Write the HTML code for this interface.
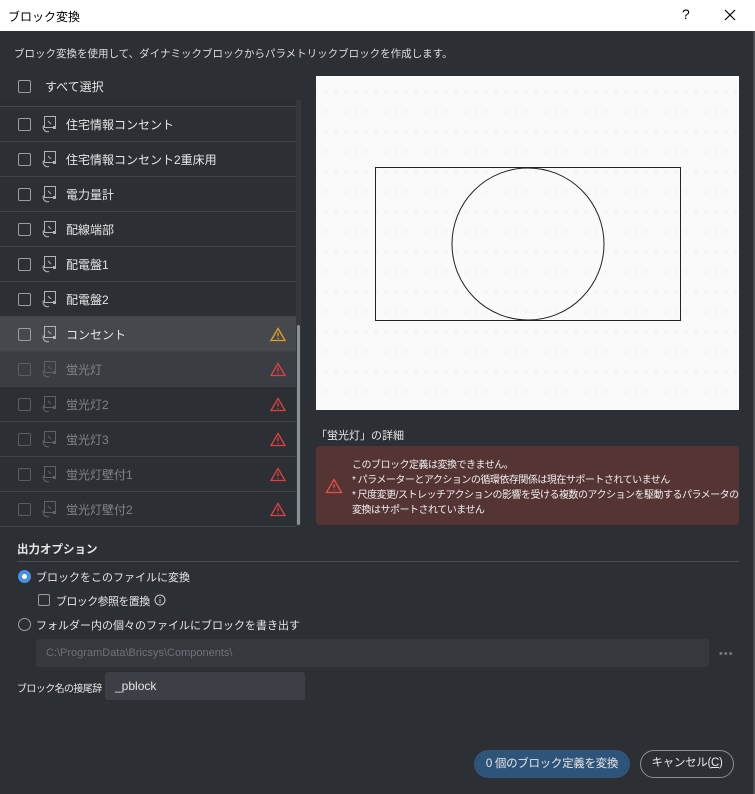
<!DOCTYPE html>
<html><head><meta charset="utf-8"><style>
*{box-sizing:border-box;margin:0;padding:0}
body{width:755px;height:794px;background:#2c2f34;font-family:"Liberation Sans","Noto Sans CJK JP",sans-serif;font-size:12px;color:#e6e6e6;position:relative;overflow:hidden}
.abs{position:absolute;white-space:nowrap}
.title{left:0;top:0;width:755px;height:31px;background:#fff;color:#000;font-size:12px}
.cb{position:absolute;width:13px;height:13px;border:1.5px solid #9a9ea4;border-radius:2px}
.row{position:absolute;left:0;width:296px;height:35px;border-bottom:1px solid #40434a}
.row .cb{left:18px;top:11px}
.row svg.ic{position:absolute;left:39px;top:8px}
.row .t{position:absolute;left:66px;top:9px;font-size:12px}
.row svg.w{position:absolute;left:270px;top:10px}
.dim{color:#80848a}
.dim .cb{border-color:#5a5e64}
</style></head><body>
<div class="abs title"><span class="abs" style="left:8px;top:8px">ブロック変換</span><span class="abs" style="left:682px;top:6px;font-size:14px">?</span>
<svg class="abs" style="left:724px;top:9px" width="12" height="12"><path d="M1 1L11 11M11 1L1 11" stroke="#000" stroke-width="1.2"/></svg></div>
<div class="abs" style="left:753px;top:31px;width:2px;height:763px;background:#4a4d52"></div>
<div class="abs" style="left:14px;top:46px;font-size:10.5px;color:#ddd">ブロック変換を使用して、ダイナミックブロックからパラメトリックブロックを作成します。</div>
<div class="cb" style="left:18px;top:80px"></div>
<div class="abs" style="left:45px;top:78px">すべて選択</div>
<div class="abs" style="left:0;top:100px;width:296px;height:7px;background:#2a2d31;border-bottom:1px solid #40434a"></div>
<div class="abs" style="left:296px;top:100px;width:5px;height:426px;background:#34373c"></div>
<div class="abs" style="left:297px;top:325px;width:3px;height:200px;background:#8c9097;border-radius:2px"></div>
<div id="list"></div>
<div class="abs" style="left:316px;top:76px;width:423px;height:334px;background:#fafafa;background-image:radial-gradient(#e4e4e4 0.5px,transparent 0.7px);background-size:10px 20px;background-position:5px 6px"></div>
<svg class="abs" style="left:316px;top:76px" width="423" height="334"><rect x="59.5" y="91.5" width="305" height="153" fill="none" stroke="#222" stroke-width="1"/><circle cx="212" cy="168" r="76" fill="none" stroke="#222" stroke-width="1"/></svg>
<div class="abs" style="left:316px;top:427px;font-size:11px">「蛍光灯」の詳細</div>
<div class="abs" style="left:316px;top:446px;width:423px;height:79px;background:#553533;border-radius:4px"></div>
<svg class="abs" style="left:325px;top:478px" width="18" height="16"><path d="M9 1.5L16.5 14.5H1.5Z" fill="none" stroke="#e84c4c" stroke-width="1.3"/><path d="M9 6V10M9 11.5V12.5" stroke="#e84c4c" stroke-width="1.3"/></svg>
<div class="abs" style="left:352px;top:458px;font-size:10px;line-height:15px;color:#eee;letter-spacing:-0.5px">このブロック定義は変換できません。<br>* パラメーターとアクションの循環依存関係は現在サポートされていません<br>* 尺度変更/ストレッチアクションの影響を受ける複数のアクションを駆動するパラメータの<br>変換はサポートされていません</div>
<div class="abs" style="left:17px;top:541px;font-weight:bold;font-size:11.5px">出力オプション</div>
<div class="abs" style="left:17px;top:561px;width:722px;height:1px;background:#4a4d52"></div>
<div class="abs" style="left:18px;top:570px;width:13px;height:13px;border-radius:50%;background:#4a90e2"><div class="abs" style="left:4px;top:4px;width:5px;height:5px;border-radius:50%;background:#fff"></div></div>
<div class="abs" style="left:36px;top:569px;font-size:11px">ブロックをこのファイルに変換</div>
<div class="cb" style="left:38px;top:594px;width:12px;height:12px"></div>
<div class="abs" style="left:56px;top:593px;font-size:11px;letter-spacing:-0.6px">ブロック参照を置換</div>
<svg class="abs" style="left:154px;top:594px" width="12" height="12"><circle cx="6" cy="6" r="5" fill="none" stroke="#ccc"/><path d="M6 5V9M6 3V4" stroke="#ccc"/></svg>
<div class="abs" style="left:18px;top:618px;width:13px;height:13px;border-radius:50%;border:1.5px solid #9a9ea4"></div>
<div class="abs" style="left:36px;top:617px;font-size:11px">フォルダー内の個々のファイルにブロックを書き出す</div>
<div class="abs" style="left:36px;top:639px;width:673px;height:28px;background:#35383d;border-radius:3px;color:#6e7278;font-size:11px;padding:8px 10px">C:\ProgramData\Bricsys\Components\</div>
<div class="abs" style="left:719px;top:648px;color:#777;font-size:11px;letter-spacing:1px">•••</div>
<div class="abs" style="left:17px;top:680px;font-size:10px;letter-spacing:-0.6px">ブロック名の接尾辞</div>
<div class="abs" style="left:105px;top:672px;width:200px;height:28px;background:#3c3f45;border-radius:3px;padding:7px 10px;font-size:12px">_pblock</div>
<div class="abs" style="left:474px;top:750px;width:156px;height:28px;background:#2f5479;border-radius:14px;text-align:center;line-height:28px;font-size:11.5px;letter-spacing:-0.3px">0 個のブロック定義を変換</div>
<div class="abs" style="left:640px;top:750px;width:94px;height:28px;border:1.5px solid #8a8e94;border-radius:14px;text-align:center;line-height:25px;font-size:11.5px;letter-spacing:-0.3px">キャンセル(<u>C</u>)</div>
<script>
var items=[["住宅情報コンセント",0,""],["住宅情報コンセント2重床用",0,""],["電力量計",0,""],["配線端部",0,""],["配電盤1",0,""],["配電盤2",0,""],["コンセント",0,"y"],["蛍光灯",1,"r"],["蛍光灯2",1,"r"],["蛍光灯3",1,"r"],["蛍光灯壁付1",1,"r"],["蛍光灯壁付2",1,"r"]];
var h="";
items.forEach(function(it,i){var top=107+i*35;var bg=i==6?"#45484d":(i==7?"#3a3d42":"#2c2f34");
var c=it[1]?"#5e6268":"#b0b4b8";
var w="";if(it[2]){var col=it[2]=="y"?"#e8a020":"#e04040";w='<svg class="w" width="16" height="15"><path d="M8 1.5L15 13.5H1Z" fill="none" stroke="'+col+'" stroke-width="1.3"/><path d="M8 5.5V9.5M8 11V12" stroke="'+col+'" stroke-width="1.3"/></svg>';}
h+='<div class="row'+(it[1]?' dim':'')+'" style="top:'+top+'px;background:'+bg+'"><div class="cb"></div><svg class="ic" width="20" height="20"><rect x="5.5" y="1.5" width="11" height="11" fill="none" stroke="'+c+'" stroke-width="1"/><path d="M9 6L12 9" stroke="'+c+'"/><rect x="14" y="11" width="3" height="3" fill="'+c+'"/><path d="M4.5 10.5A4.5 4.5 0 0 0 10 16.5" fill="none" stroke="'+c+'" stroke-width="1.1"/></svg><span class="t">'+it[0]+'</span>'+w+'</div>';});
document.getElementById("list").innerHTML=h;
</script>
</body></html>
